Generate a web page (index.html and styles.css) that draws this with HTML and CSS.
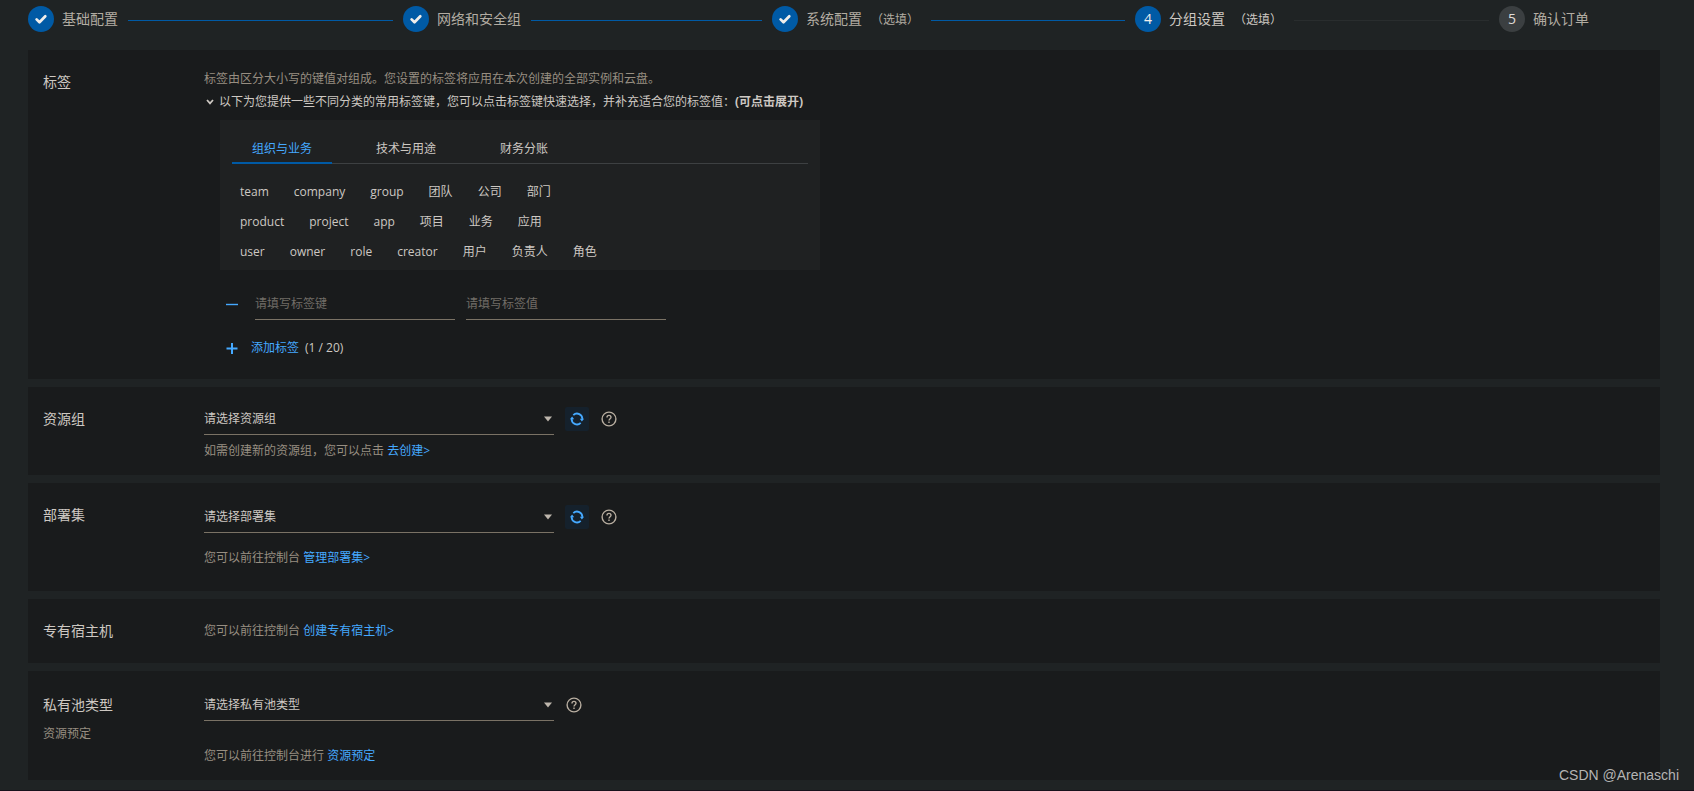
FILE: index.html
```html
<!DOCTYPE html>
<html lang="zh-CN">
<head>
<meta charset="utf-8">
<meta name="viewport" content="width=device-width, initial-scale=1">
<title>分组设置</title>
<link rel="stylesheet" href="styles.css">
</head>
<body>
<svg class="sprite" aria-hidden="true">
  <symbol id="check" viewBox="0 0 26 26"><path d="M8.6 13.4l2.9 2.9 5.8-6" fill="none" stroke="currentColor" stroke-width="2.7" stroke-linecap="round" stroke-linejoin="round"/></symbol>
  <symbol id="refresh" viewBox="0 0 14 14"><g fill="none" stroke="currentColor" stroke-width="1.8"><path d="M3.3 3.1A5.3 5.3 0 0 1 12.3 7.4"/><path d="M10.7 10.9A5.3 5.3 0 0 1 1.7 6.6"/></g><path d="M9.8 6.8H14l-2.1 2.7zM0 7.2h4.2L2.1 4.5z" fill="currentColor"/></symbol>
  <symbol id="help" viewBox="0 0 16 16"><g fill="none" stroke="currentColor" stroke-width="1.4"><circle cx="8" cy="8" r="6.9"/><path d="M6 6.4c0-1.3.8-2 2-2s2 .7 2 1.9c0 1.4-2 1.5-2 3.2"/></g><path d="M7.3 10.6h1.4V12H7.3z" fill="currentColor"/></symbol>
  <symbol id="arrow" viewBox="0 0 10 6"><path d="M1 .5h8L5 5.5z" fill="currentColor"/></symbol>
</svg>

<ol class="steps">
  <li class="step done"><span class="dot"><svg><use href="#check"/></svg></span><span class="name">基础配置</span></li>
  <li class="step done"><span class="dot"><svg><use href="#check"/></svg></span><span class="name">网络和安全组</span></li>
  <li class="step done"><span class="dot"><svg><use href="#check"/></svg></span><span class="name">系统配置</span><span class="optional">（选填）</span></li>
  <li class="step current"><span class="dot">4</span><span class="name">分组设置</span><span class="optional">（选填）</span></li>
  <li class="step"><span class="dot">5</span><span class="name">确认订单</span></li>
</ol>

<main>
  <section class="panel tags-panel">
    <h2 class="label">标签</h2>
    <div>
      <p class="desc">标签由区分大小写的键值对组成。您设置的标签将应用在本次创建的全部实例和云盘。</p>
      <button class="toggle" type="button"><svg class="chevron" viewBox="0 0 8 8"><path d="M1 2l3 3.4L7 2" fill="none" stroke="currentColor" stroke-width="1.7"/></svg><span>以下为您提供一些不同分类的常用标签键，您可以点击标签键快速选择，并补充适合您的标签值：<b>(可点击展开)</b></span></button>
      <div class="presets">
        <div class="tabs" role="tablist">
          <button class="tab active" role="tab" aria-selected="true">组织与业务</button>
          <button class="tab" role="tab">技术与用途</button>
          <button class="tab" role="tab">财务分账</button>
        </div>
        <div class="keys">
          <div class="keys-row"><button>team</button><button>company</button><button>group</button><button>团队</button><button>公司</button><button>部门</button></div>
          <div class="keys-row"><button>product</button><button>project</button><button>app</button><button>项目</button><button>业务</button><button>应用</button></div>
          <div class="keys-row"><button>user</button><button>owner</button><button>role</button><button>creator</button><button>用户</button><button>负责人</button><button>角色</button></div>
        </div>
      </div>
      <div class="pair">
        <button class="round" type="button" aria-label="删除标签"><svg viewBox="0 0 12 12"><path d="M0 6.5h12" stroke="currentColor" stroke-width="1.4"/></svg></button>
        <input type="text" placeholder="请填写标签键" aria-label="标签键">
        <input type="text" placeholder="请填写标签值" aria-label="标签值">
      </div>
      <div class="add">
        <button class="round" type="button" aria-label="添加"><svg viewBox="0 0 12 12"><path d="M.5 6.5h11M6 1v11" stroke="currentColor" stroke-width="2"/></svg></button>
        <button class="add-link" type="button">添加标签</button>
        <span class="count">(1 / 20)</span>
      </div>
    </div>
  </section>

  <section class="panel group-panel">
    <h2 class="label"><label for="group">资源组</label></h2>
    <div>
      <div class="control">
        <div class="select"><select id="group"><option>请选择资源组</option></select><svg><use href="#arrow"/></svg></div>
        <button class="refresh" type="button" aria-label="刷新"><svg><use href="#refresh"/></svg></button>
        <button class="help" type="button" aria-label="帮助"><svg><use href="#help"/></svg></button>
      </div>
      <p class="hint">如需创建新的资源组，您可以点击 <a href="#">去创建&gt;</a></p>
    </div>
  </section>

  <section class="panel deploy-panel">
    <h2 class="label"><label for="deploy">部署集</label></h2>
    <div>
      <div class="control">
        <div class="select"><select id="deploy"><option>请选择部署集</option></select><svg><use href="#arrow"/></svg></div>
        <button class="refresh" type="button" aria-label="刷新"><svg><use href="#refresh"/></svg></button>
        <button class="help" type="button" aria-label="帮助"><svg><use href="#help"/></svg></button>
      </div>
      <p class="hint">您可以前往控制台 <a href="#">管理部署集&gt;</a></p>
    </div>
  </section>

  <section class="panel host-panel">
    <h2 class="label">专有宿主机</h2>
    <p class="hint">您可以前往控制台 <a href="#">创建专有宿主机&gt;</a></p>
  </section>

  <section class="panel pool-panel">
    <div>
      <h2 class="label"><label for="pool">私有池类型</label></h2>
      <p class="sub">资源预定</p>
    </div>
    <div>
      <div class="control">
        <div class="select"><select id="pool"><option>请选择私有池类型</option></select><svg><use href="#arrow"/></svg></div>
        <button class="help" type="button" aria-label="帮助"><svg><use href="#help"/></svg></button>
      </div>
      <p class="hint">您可以前往控制台进行 <a href="#">资源预定</a></p>
    </div>
  </section>
</main>
<div class="watermark">CSDN @Arenaschi</div>
</body>
</html>
```

FILE: styles.css
```css
* { box-sizing: border-box; }

body {
  position: relative;
  margin: 0;
  padding-bottom: 10px;
  border-bottom: 1px solid #17111b;
  background: #1f2324;
  color: #cdc8c2;
  font: 12px/20px "Open Sans", "Noto Sans CJK SC", sans-serif;
}

h2, p, ol { margin: 0; padding: 0; }
a { color: #45a9ff; text-decoration: none; }

button, input, select {
  margin: 0;
  padding: 0;
  border: 0;
  background: none;
  color: inherit;
  font: inherit;
}
button { cursor: pointer; }
.sprite { display: none; }

/* Progress */
.steps {
  display: grid;
  grid-template-columns: 375fr 369fr 363fr 364fr 161fr;
  margin: 6px 34px 18px 28px;
  list-style: none;
}
.step {
  display: flex;
  align-items: center;
  height: 26px;
  color: #b2aca2;
  font-size: 14px;
  white-space: nowrap;
}
.dot {
  display: grid;
  place-items: center;
  width: 26px;
  height: 26px;
  margin-right: 8px;
  border-radius: 50%;
  background: #3b3f41;
  color: #e0ddd9;
}
.dot svg { width: 26px; height: 26px; }
.done .dot, .current .dot { background: #005aa5; color: #f0eeeb; }
.current { color: #cdc8c2; }
.optional {
  margin: 0 2px 0 9px;
  font-family: "Noto Sans CJK TC", "Noto Sans CJK SC", sans-serif;
  font-size: 12px;
}
.step:not(:last-child)::after {
  content: "";
  flex: 1;
  height: 1px;
  margin: 2px 10px 0;
  background: #292d2e;
}
.step.done::after { background: #005aa5; }

/* Sections */
main { display: grid; gap: 8px; margin: 0 34px 0 28px; }
.panel {
  display: grid;
  grid-template-columns: 161px 1fr;
  padding: 16px 15px;
  background: #191b1c;
}
.label { padding-top: 6px; font-size: 14px; font-weight: 400; line-height: 20px; }
.hint, .sub, .desc { color: #978e81; }
.desc { padding-top: 1px; line-height: 24px; }
.tags-panel { padding-bottom: 17px; }

.toggle { display: flex; align-items: center; gap: 5px; padding-left: 2px; line-height: 22px; text-align: left; }
.chevron { width: 8px; height: 8px; }

.presets {
  max-width: 600px;
  margin: 7px 0 18px 16px;
  padding: 12px 12px 3px;
  background: #1f2122;
}
.tabs { display: flex; gap: 24px; box-shadow: inset 0 -1px #3d4042; }
.tab {
  padding: 6px 20px 2px;
  border-bottom: 2px solid transparent;
  line-height: 22px;
}
.tab.active { border-color: #005aa5; color: #45a9ff; }
.keys { margin: 13px 0 0 8px; line-height: 30px; }
.keys-row { display: flex; gap: 25px; }

.pair, .add { display: flex; align-items: center; margin-left: 14px; }
.round {
  display: grid;
  place-items: center;
  width: 28px;
  height: 28px;
  border-radius: 50%;
  color: #45a9ff;
}
.round svg { width: 12px; height: 12px; }
.pair input {
  width: 200px;
  height: 32px;
  margin-left: 9px;
  border-bottom: 1px solid #7a7265;
}
.pair input + input { margin-left: 11px; }
.pair input::placeholder { color: #716d67; opacity: 1; }
.add { margin-top: 14px; }
.add-link { margin-left: 5px; color: #45a9ff; }
.count { margin-left: 6px; }

.control { display: flex; align-items: center; }
.select { display: grid; align-items: center; width: 350px; }
.select > * { grid-area: 1 / 1; }
.select select {
  width: 100%;
  height: 32px;
  appearance: none;
  border-bottom: 1px solid #7a7265;
}
.select option { background: #191b1c; }
.select svg { justify-self: end; width: 10px; height: 6px; margin-right: 1px; color: #bdb6ac; pointer-events: none; }
.refresh {
  display: grid;
  place-items: center;
  width: 24px;
  height: 24px;
  margin-left: 11px;
  border-radius: 2px;
  background: #15212c;
  color: #45a9ff;
}
.refresh svg { width: 14px; height: 14px; }
.help { display: grid; margin-left: 12px; color: #b8aea0; }
.help svg { width: 16px; height: 16px; }

.group-panel { padding-bottom: 14px; }
.group-panel .hint { margin-top: 6px; }
.deploy-panel { padding-bottom: 23px; }
.deploy-panel .control { margin-top: 2px; }
.deploy-panel .hint { margin-top: 15px; }
.host-panel { padding-bottom: 22px; }
.host-panel .hint { padding-top: 6px; }
.pool-panel { padding: 18px 15px 14px; }
.pool-panel .sub { margin-top: 9px; }
.pool-panel .hint { margin-top: 25px; }

.watermark {
  position: absolute;
  right: 15px;
  bottom: 5px;
  color: #b4b4b4;
  font: 14px/20px "Liberation Sans", sans-serif;
}
```
